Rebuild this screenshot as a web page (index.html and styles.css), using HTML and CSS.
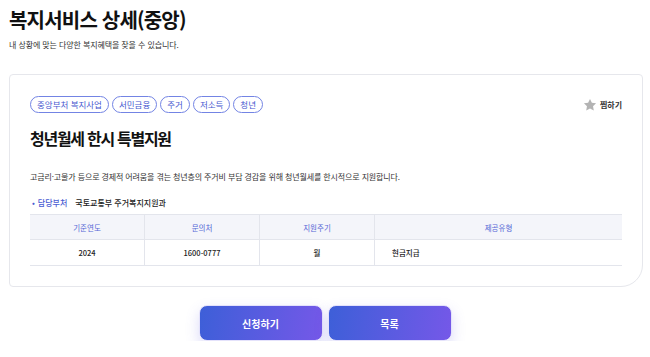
FILE: index.html
```html
<!DOCTYPE html>
<html lang="ko">
<head>
  <meta charset="UTF-8" />
  <meta name="viewport" content="width=device-width, initial-scale=1.0">
  <title>복지서비스 상세(중앙)</title>
  <link rel="stylesheet" href="styles.css">
</head>
<body>

  <div class="page-head">
    <h1 class="page-title">복지서비스 상세(중앙)</h1>
    <p class="page-desc">내 상황에 맞는 다양한 복지혜택을 찾을 수 있습니다.</p>
  </div>

  <div class="card">
    <div class="card-top">
      <div class="tags">
        <span class="tag">중앙부처 복지사업</span>
        <span class="tag">서민금융</span>
        <span class="tag">주거</span>
        <span class="tag">저소득</span>
        <span class="tag">청년</span>
      </div>
      <button class="fav-btn">
        <svg class="star" viewBox="0 0 24 24"><path d="M12 1.5l3.2 6.6 7.2 1-5.2 5.1 1.3 7.2L12 18l-6.5 3.4 1.3-7.2L1.6 9.1l7.2-1z"/></svg>
        찜하기
      </button>
    </div>

    <h2 class="svc-title">청년월세 한시 특별지원</h2>
    <p class="svc-desc">고금리·고물가 등으로 경제적 어려움을 겪는 청년층의 주거비 부담 경감을 위해 청년월세를 한시적으로 지원합니다.</p>

    <div class="dept">
      <span class="dept-label">담당부처</span>
      <span class="dept-value">국토교통부 주거복지지원과</span>
    </div>

    <table class="info-table">
      <thead>
        <tr>
          <th class="col-year">기준연도</th>
          <th class="col-tel">문의처</th>
          <th class="col-cycle">지원주기</th>
          <th>제공유형</th>
        </tr>
      </thead>
      <tbody>
        <tr>
          <td>2024</td>
          <td>1600-0777</td>
          <td>월</td>
          <td class="left">현금지급</td>
        </tr>
      </tbody>
    </table>
  </div>

  <div class="actions">
    <button class="main-btn">신청하기</button>
    <button class="main-btn">목록</button>
  </div>

</body>
</html>
```

FILE: styles.css
```css
body {
  margin: 0;
  padding: 7px 7px 0 9px;
  font-family: "Noto Sans CJK KR", "Noto Sans", sans-serif;
  background: #fff;
  color: #222;
}

.page-title {
  margin: 0;
  font-size: 20px;
  line-height: 26px;
  font-weight: 700;
  color: #111;
  letter-spacing: -0.04em;
}

.page-desc {
  margin: 6px 0 0;
  font-size: 8px;
  line-height: 12px;
  color: #333;
  letter-spacing: -0.1px;
}

.card {
  margin-top: 23px;
  padding: 21px 20px 20px;
  border: 1px solid #e6e7ec;
  border-radius: 4px 4px 22px 4px;
}

.card-top {
  display: flex;
  justify-content: space-between;
  align-items: center;
}

.tags {
  display: flex;
  gap: 3px;
}

.tag {
  height: 17px;
  padding: 0 6px;
  border: 1px solid #7384e4;
  border-radius: 9px;
  box-sizing: border-box;
  font-size: 8.5px;
  line-height: 15px;
  color: #4657cf;
}

.fav-btn {
  display: flex;
  align-items: center;
  gap: 3px;
  padding: 0;
  border: none;
  background: none;
  font-family: inherit;
  font-size: 8px;
  font-weight: 700;
  color: #333;
}

.star {
  width: 14px;
  height: 14px;
  fill: #b3b3b3;
}

.svc-title {
  margin: 14px 0 0;
  font-size: 16px;
  line-height: 22px;
  font-weight: 700;
  color: #111;
  letter-spacing: -0.08em;
}

.svc-desc {
  margin: 22px 0 0;
  font-size: 8px;
  line-height: 12px;
  color: #333;
  letter-spacing: -0.12px;
}

.dept {
  margin-top: 14px;
  display: flex;
  align-items: center;
  gap: 8px;
  font-size: 8px;
  line-height: 12px;
  font-weight: 500;
}

.dept-label {
  color: #4a5bd2;
}

.dept-label::before {
  content: "•";
  margin: 0 3px 0 2px;
}

.dept-value {
  color: #222;
}

.info-table {
  width: 100%;
  margin-top: 5px;
  border-collapse: collapse;
  font-size: 7.5px;
}

.info-table th,
.info-table td {
  text-align: center;
  border-top: 1px solid #e3e5ec;
  border-bottom: 1px solid #e3e5ec;
  border-left: 1px solid #e3e5ec;
  padding: 0;
}

.info-table th:first-child,
.info-table td:first-child {
  border-left: none;
}

.info-table th {
  height: 24px;
  background: #f4f5fa;
  color: #5567d6;
  font-weight: 400;
}

.info-table td {
  height: 25px;
  color: #222;
  font-weight: 500;
}

.info-table td.left {
  text-align: left;
  padding-left: 17px;
}

.col-year, .col-tel, .col-cycle {
  width: 114px;
}

.actions {
  display: flex;
  justify-content: center;
  gap: 5px;
  margin-top: 18px;
  padding-right: 2px;
}

.main-btn {
  width: 124px;
  height: 36px;
  border: 1px solid #e4e2fb;
  border-radius: 8px;
  background: linear-gradient(100deg, #3d5fd8, #7558e8);
  color: #fff;
  font-family: inherit;
  font-size: 10px;
  font-weight: 700;
  box-shadow: 0 6px 14px rgba(95, 90, 225, 0.22);
}
```
